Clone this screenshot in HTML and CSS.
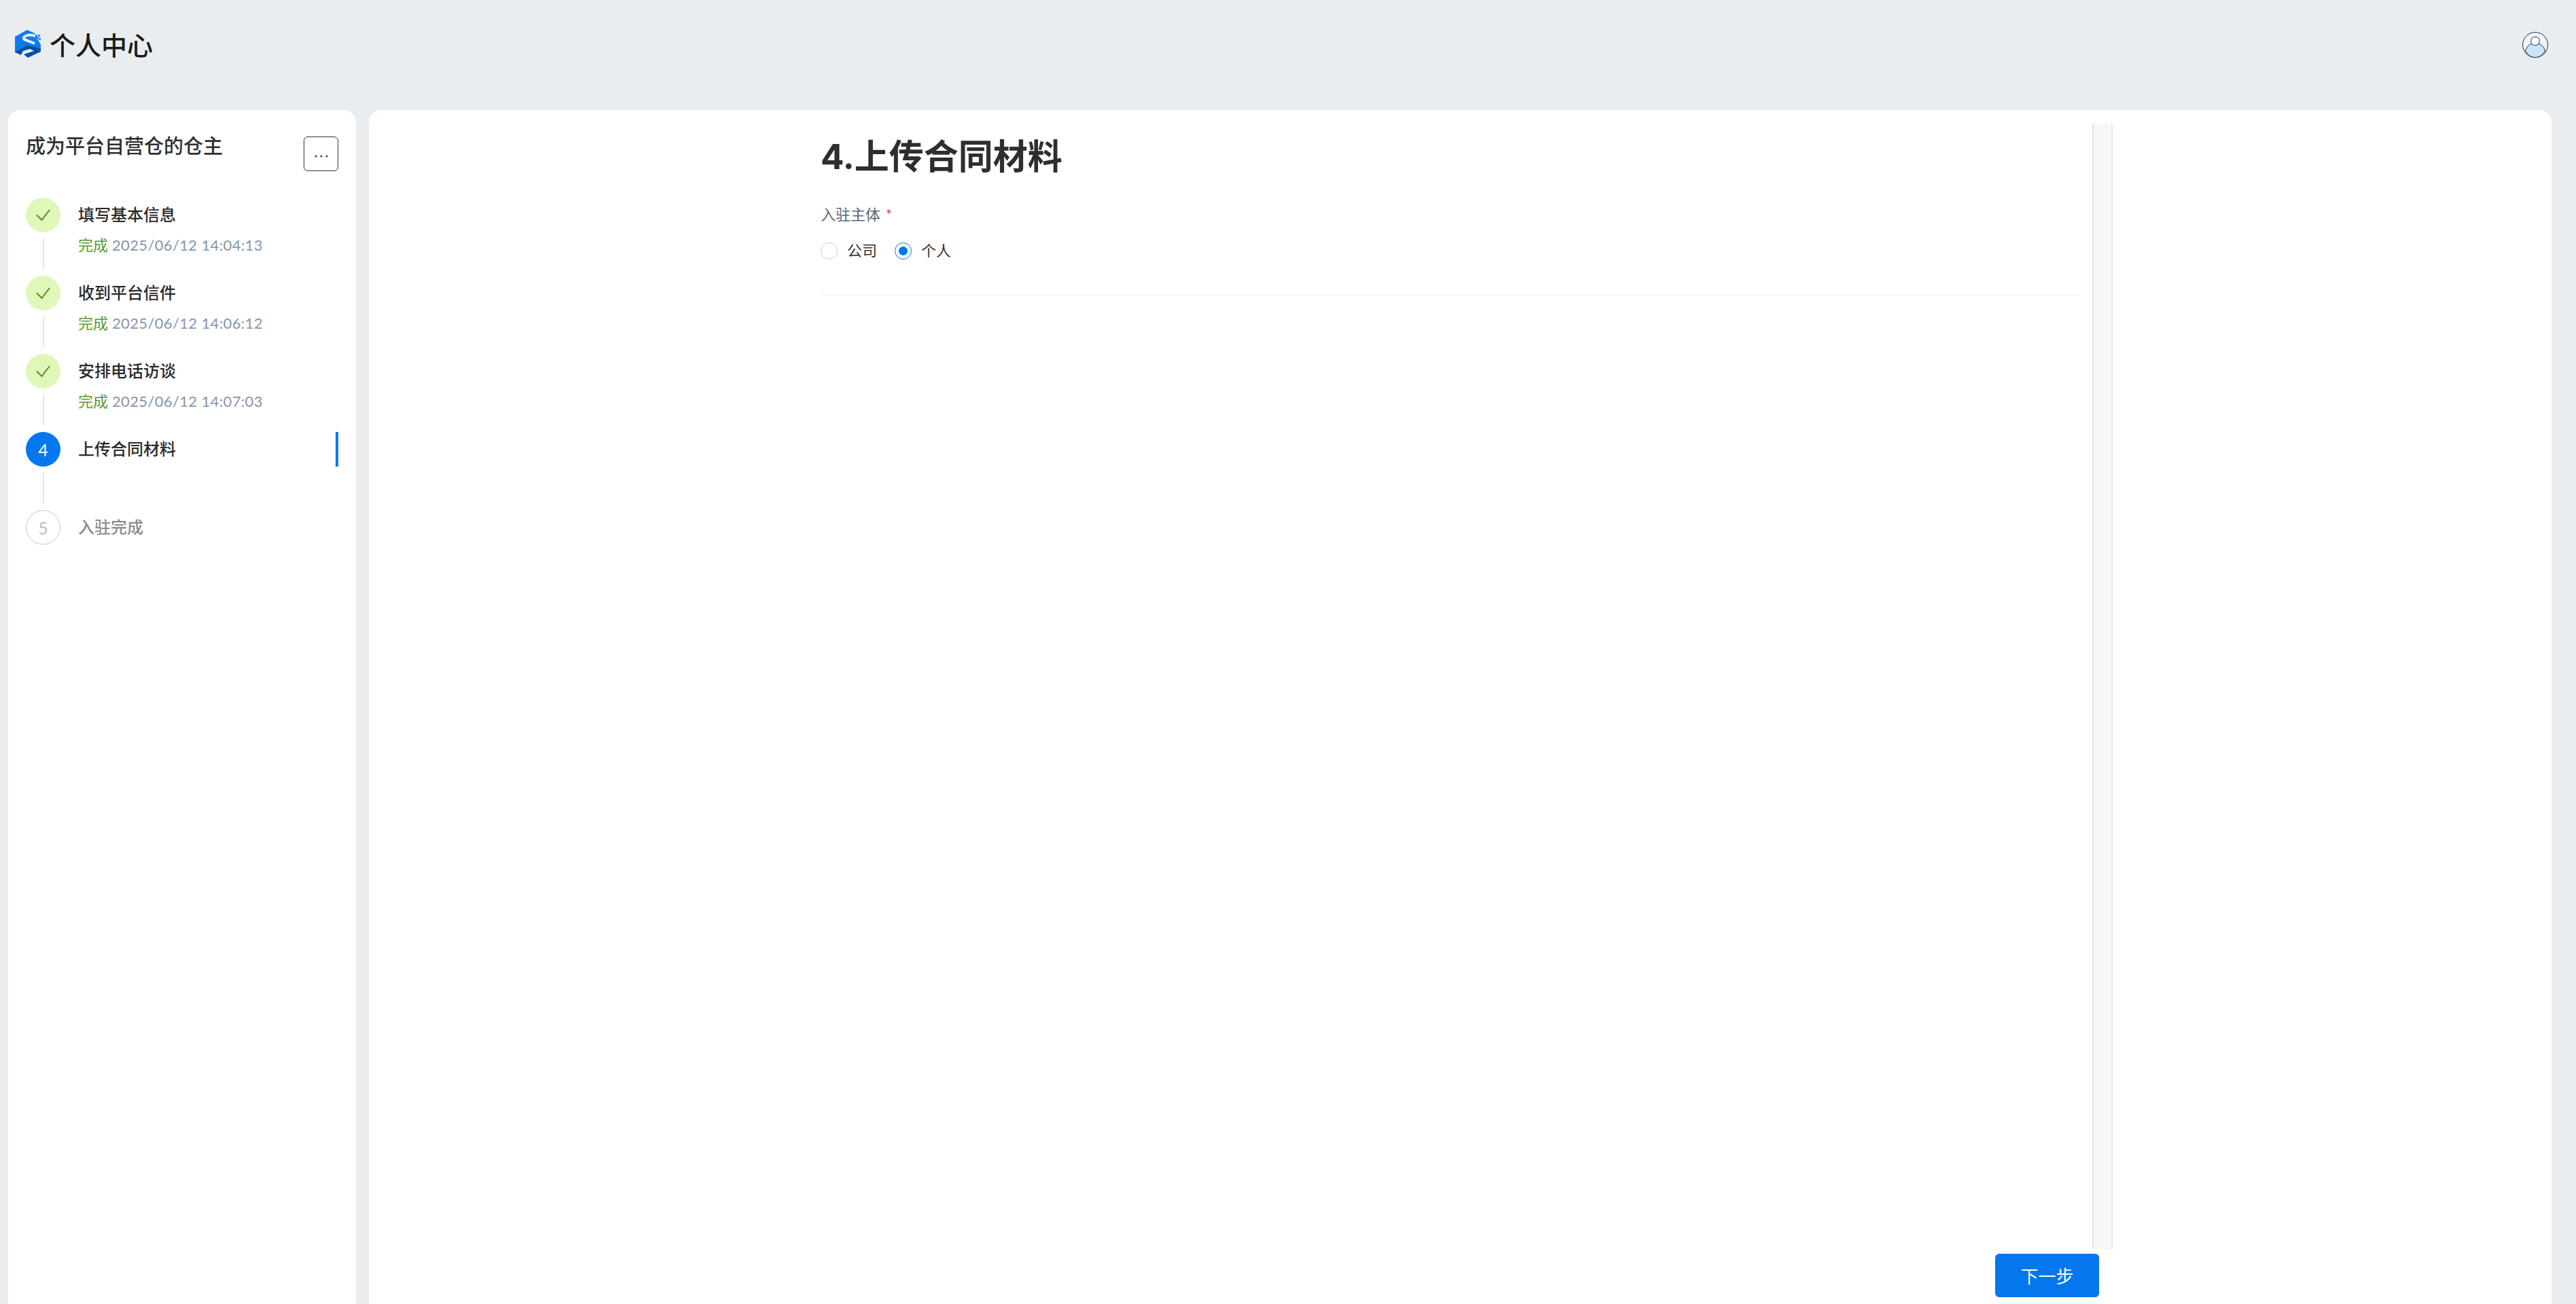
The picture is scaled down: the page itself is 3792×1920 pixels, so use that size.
FILE: index.html
```html
<!DOCTYPE html>
<html lang="zh-CN">
<head>
<meta charset="utf-8">
<title>个人中心</title>
<link rel="stylesheet" href="styles.css">
</head>
<body>
<header class="topbar">
  <div class="brand">
    <svg class="logo" viewBox="0 0 40 42" width="40" height="42">
      <path fill="#0c7bf0" d="M20 0 L31 5 L40 22 L40 27 L20 22 L2 32 L2 10 Z"/>
      <path fill="none" stroke="#e9edf0" stroke-width="4" d="M32 9 C26 7 20 7 16 10 C14 12 15 14 18 15 L31 20"/>
      <path fill="#00519f" d="M2 32 L20 22 L40 27 L40 32 L21 41 L15 36 L30 31 L24 28 L14 31 L11 37 L2 33 Z"/>
      <g fill="#2a8bf2"><rect x="32" y="7" width="3" height="3"/><rect x="36" y="7" width="3" height="3"/><rect x="34" y="10" width="3" height="3"/><rect x="37" y="12" width="3" height="3"/><rect x="33" y="13" width="2" height="2"/></g>
    </svg>
    <h1 class="brand-name">个人中心</h1>
  </div>
  <svg class="avatar" viewBox="0 0 40 40" width="40" height="40">
    <circle cx="20" cy="20" r="18.5" fill="#e8f4ff" stroke="#2b2f36" stroke-width="1"/>
    <path d="M5.5 29 C8 20 14 18 20 18 C26 18 32 20 34.5 29 C31 35 26 38.5 20 38.5 C14 38.5 9 35 5.5 29Z" fill="#c8e4ff" stroke="#2b2f36" stroke-width="1"/>
    <circle cx="20" cy="14.5" r="6.3" fill="#fff" stroke="#2b2f36" stroke-width="1"/>
  </svg>
</header>
<div class="content">
  <aside class="sidebar">
    <div class="side-head">
      <h2 class="side-title">成为平台自营仓的仓主</h2>
      <button class="more" type="button" aria-label="更多">
        <svg viewBox="0 0 20 4" width="20" height="4"><circle cx="2" cy="2" r="1.6"/><circle cx="10" cy="2" r="1.6"/><circle cx="18" cy="2" r="1.6"/></svg>
      </button>
    </div>
    <ol class="steps">
      <li class="step">
        <div class="rail">
          <span class="dot dot-done"><svg viewBox="0 0 24 20" width="24" height="20"><path d="M2 9.5 L9.5 17 L21 2" fill="none" stroke="#4e8f1e" stroke-width="2"/></svg></span>
          <span class="line"></span>
        </div>
        <div class="step-body">
          <div class="step-name">填写基本信息</div>
          <div class="step-meta"><span class="ok">完成</span> 2025/06/12 14:04:13</div>
        </div>
      </li>
      <li class="step">
        <div class="rail">
          <span class="dot dot-done"><svg viewBox="0 0 24 20" width="24" height="20"><path d="M2 9.5 L9.5 17 L21 2" fill="none" stroke="#4e8f1e" stroke-width="2"/></svg></span>
          <span class="line"></span>
        </div>
        <div class="step-body">
          <div class="step-name">收到平台信件</div>
          <div class="step-meta"><span class="ok">完成</span> 2025/06/12 14:06:12</div>
        </div>
      </li>
      <li class="step">
        <div class="rail">
          <span class="dot dot-done"><svg viewBox="0 0 24 20" width="24" height="20"><path d="M2 9.5 L9.5 17 L21 2" fill="none" stroke="#4e8f1e" stroke-width="2"/></svg></span>
          <span class="line"></span>
        </div>
        <div class="step-body">
          <div class="step-name">安排电话访谈</div>
          <div class="step-meta"><span class="ok">完成</span> 2025/06/12 14:07:03</div>
        </div>
      </li>
      <li class="step">
        <div class="rail">
          <span class="dot dot-active">4</span>
          <span class="line"></span>
        </div>
        <div class="step-body">
          <div class="step-name step-name-active">上传合同材料</div>
        </div>
      </li>
      <li class="step">
        <div class="rail">
          <span class="dot dot-todo">5</span>
        </div>
        <div class="step-body">
          <div class="step-name step-name-todo">入驻完成</div>
        </div>
      </li>
    </ol>
  </aside>
  <main class="panel">
    <div class="panel-body">
      <form class="form">
        <h2 class="form-title">4.上传合同材料</h2>
        <div class="field-label">入驻主体 <span class="req">*</span></div>
        <div class="radios">
          <label class="radio"><span class="radio-mark"></span>公司</label>
          <label class="radio"><span class="radio-mark radio-mark-on"></span>个人</label>
        </div>
        <hr class="divider">
      </form>
      <div class="scroller"></div>
    </div>
    <div class="panel-foot">
      <button class="next" type="button">下一步</button>
    </div>
  </main>
</div>
</body>
</html>
```
FILE: styles.css
```css
* { box-sizing: border-box; }
html, body { margin: 0; height: 100%; }
body {
  width: 3792px;
  height: 1920px;
  overflow: hidden;
  background: #e9edf0;
  color: #2e2e2e;
  font-family: "Lato", "Noto Sans CJK SC", sans-serif;
  display: flex;
  flex-direction: column;
}
.topbar {
  height: 162px;
  flex: none;
  padding: 0 40px 30px 20px;
  display: flex;
  align-items: center;
  justify-content: space-between;
}
.brand { display: flex; align-items: center; gap: 13px; }
.logo { display: block; margin-top: -2px; }
.brand-name {
  margin: 0;
  font-size: 38px;
  line-height: 48px;
  font-weight: 500;
  color: #1a1a1a;
}
.avatar { display: block; }
.content {
  flex: 1;
  min-height: 0;
  display: flex;
  gap: 19px;
  padding: 0 36px 0 12px;
}
.sidebar {
  width: 512px;
  flex: none;
  background: #fff;
  border-radius: 18px 18px 0 0;
  padding: 39px 26px 0;
}
.side-head {
  display: flex;
  justify-content: space-between;
  align-items: flex-start;
  height: 50px;
  margin-bottom: 40px;
}
.side-title {
  margin: 0;
  font-size: 29px;
  line-height: 28px;
  font-weight: 500;
  color: #303030;
}
.more {
  width: 51px;
  height: 51px;
  padding: 6px 0 0;
  background: #fff;
  border: 1px solid #333;
  border-radius: 6px;
  display: flex;
  align-items: center;
  justify-content: center;
}
.more svg { display: block; fill: #444; }
.steps { list-style: none; margin: 0; padding: 0; }
.step {
  height: 115px;
  display: flex;
  gap: 26px;
}
.rail {
  width: 51px;
  flex: none;
  display: flex;
  flex-direction: column;
  align-items: center;
}
.dot {
  width: 51px;
  height: 51px;
  flex: none;
  border-radius: 50%;
  display: flex;
  align-items: center;
  justify-content: center;
  font-size: 25px;
}
.dot-done { background: #dff7b8; }
.dot-done svg { display: block; }
.dot-active { background: #0277ee; color: #fff; }
.dot-todo { border: 1px solid #c4c4c4; color: #bdbdbd; background: #fff; }
.line {
  width: 2px;
  height: 45px;
  margin-top: 9px;
  background: #e4e4e4;
}
.step-body { flex: 1; min-width: 0; }
.step-name {
  height: 51px;
  line-height: 49px;
  font-size: 24px;
  font-weight: 500;
  color: #2a2a2a;
}
.step-name-active { border-right: 4px solid #0277ee; }
.step-name-todo { color: #8c8c8c; }
.step-meta {
  margin-top: 4px;
  font-size: 22px;
  line-height: 30px;
  letter-spacing: 0.35px;
  color: #8695a8;
  white-space: nowrap;
}
.ok { color: #5a9a2a; letter-spacing: 0; }
.panel {
  flex: 1;
  min-width: 0;
  background: #fff;
  border-radius: 18px 18px 0 0;
  display: flex;
  flex-direction: column;
}
.panel-body {
  flex: 1;
  min-height: 0;
  display: flex;
  padding: 20px 0 0 665px;
}
.form { width: 1852px; flex: none; }
.form-title {
  margin: 0;
  padding-top: 19px;
  font-family: "Inter", "Noto Sans CJK SC", sans-serif;
  font-size: 51px;
  line-height: 60px;
  font-weight: 700;
  color: #2e2e2e;
}
.field-label {
  margin-top: 40px;
  font-size: 22px;
  line-height: 30px;
  color: #5a6478;
}
.req { color: #f5323c; margin-left: 2px; }
.radios {
  display: flex;
  gap: 26px;
  margin-top: 25px;
}
.radio {
  display: flex;
  align-items: center;
  gap: 14px;
  font-size: 22px;
  line-height: 26px;
  color: #333;
}
.radio-mark {
  width: 25px;
  height: 25px;
  border-radius: 50%;
  border: 1px solid #ccc;
  background: #fff;
  display: flex;
  align-items: center;
  justify-content: center;
}
.radio-mark-on { border-color: #0277ee; }
.radio-mark-on::after {
  content: "";
  width: 13px;
  height: 13px;
  border-radius: 50%;
  background: #0277ee;
}
.divider {
  margin: 52px 0 0;
  border: 0;
  border-top: 1px solid #eeeeee;
}
.scroller {
  width: 30px;
  margin-left: 20px;
  background: #f8f8f8;
  border-left: 2px solid #e4e4e4;
  border-right: 2px solid #e9e9e9;
}
.panel-foot {
  flex: none;
  padding: 7px 666px 10px 0;
  display: flex;
  justify-content: flex-end;
}
.next {
  width: 153px;
  height: 64px;
  padding: 0 0 2px;
  border: 0;
  border-radius: 6px;
  background: #0277ee;
  color: #fff;
  font-family: inherit;
  font-size: 26px;
}
```
